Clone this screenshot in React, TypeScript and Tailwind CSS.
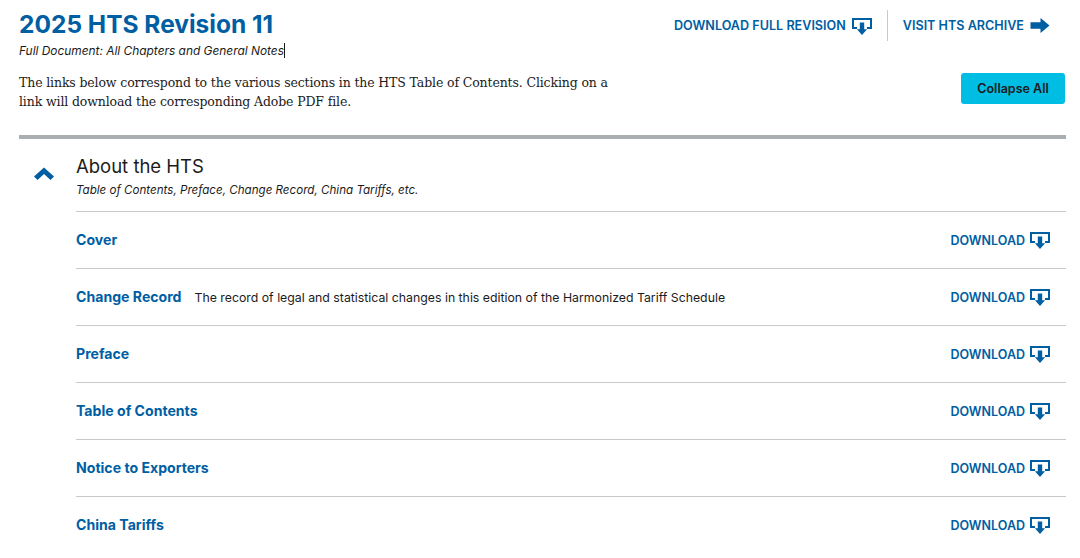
const sans = 'font-["Inter","Liberation_Sans",sans-serif]';

const rows = [
  { title: 'Cover' },
  {
    title: 'Change Record',
    note: 'The record of legal and statistical changes in this edition of the Harmonized Tariff Schedule',
  },
  { title: 'Preface' },
  { title: 'Table of Contents' },
  { title: 'Notice to Exporters' },
  { title: 'China Tariffs' },
];

function DownloadIcon() {
  return (
    <svg width="20" height="17" viewBox="0 0 20 17" className="mt-px shrink-0">
      <path d="M5 10H1V1h18v9h-4" fill="none" stroke="#005ea2" strokeWidth="2" />
      <path d="M7.800 4.500h4.400v6.700h2.900L10 17l-5.100-5.800h2.900z" fill="#005ea2" />
    </svg>
  );
}

function ArrowIcon() {
  return (
    <svg width="20" height="15" viewBox="0 0 20 15" className="shrink-0">
      <path d="M0.500 4.300h10V0L19.500 7.500 10.500 15v-4.300h-10z" fill="#005ea2" />
    </svg>
  );
}

export default function App() {
  return (
    <div className={`h-[558px] w-[1080px] overflow-hidden bg-white pl-[19px] pr-[15px] ${sans}`}>
      <div className="flex h-[71px] justify-between pt-[10px]">
        <div>
          <h1 className="text-[24.500px] leading-[28px] font-bold text-[#005ea2]">2025 HTS Revision 11</h1>
          <p className="mt-[5px] text-[11.900px] leading-[16px] text-[#1b1b1b] italic">
            <span className="border-r border-[#1b1b1b]">Full Document: All Chapters and General Notes</span>
          </p>
        </div>
        <div className="flex h-[31px] items-center pr-[15px] text-[12.600px] font-semibold text-[#005ea2]">
          <span className="mr-[6px] pt-px">DOWNLOAD FULL REVISION</span>
          <DownloadIcon />
          <div className="mx-[15px] h-[31px] w-px bg-[#c9c9c9]" />
          <span className="mr-[6px] pt-px">VISIT HTS ARCHIVE</span>
          <ArrowIcon />
        </div>
      </div>

      <div className="flex h-[64px] items-start justify-between">
        <p className="mt-[2px] w-[600px] font-['DejaVu_Serif',serif] text-[12.500px] leading-[19px] tracking-[-0.13px] text-[#1b1b1b]">
          The links below correspond to the various sections in the HTS Table of Contents. Clicking on a link will
          download the corresponding Adobe PDF file.
        </p>
        <button className="mt-[2px] h-[31px] w-[104px] rounded-[3px] bg-[#00bde3] pt-px text-[12.500px] font-semibold text-[#1b1b1b]">
          Collapse All
        </button>
      </div>

      <div className="h-1 w-[1047px] bg-[#a9aeb1]" />

      <div className="flex w-[1047px]">
        <div className="w-[57px] shrink-0 pt-[28px] pl-[15px]">
          <svg width="20" height="14" viewBox="0 0 20 14">
            <path d="M10 0.500 20 9.500l-3.500 3.500L10 7l-6.500 6L0 9.500z" fill="#005ea2" />
          </svg>
        </div>
        <div className="min-w-0 flex-1">
          <div className="h-[73px] border-b border-[#c9c9c9] pt-[15px]">
            <h2 className="text-[18.500px] leading-[24px] text-[#1b1b1b]">About the HTS</h2>
            <p className="mt-[4px] text-[11.600px] leading-[16px] text-[#1b1b1b] italic">
              Table of Contents, Preface, Change Record, China Tariffs, etc.
            </p>
          </div>
          {rows.map((row) => (
            <div
              key={row.title}
              className="flex h-[57px] items-center border-b border-[#c9c9c9] pr-[16px] last:border-transparent"
            >
              <span className="text-[14.100px] font-bold text-[#005ea2]">{row.title}</span>
              {row.note && <span className="ml-[13px] pt-[2px] text-[12.300px] text-[#1b1b1b]">{row.note}</span>}
              <span className="mr-[5px] ml-auto pt-[2px] text-[12.500px] font-semibold text-[#005ea2]">DOWNLOAD</span>
              <DownloadIcon />
            </div>
          ))}
        </div>
      </div>
    </div>
  );
}
